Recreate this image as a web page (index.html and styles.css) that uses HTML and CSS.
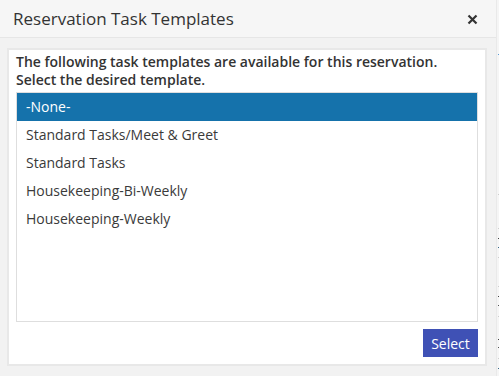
FILE: index.html
```html
<!DOCTYPE html>
<html>
<head>
    <meta charset="utf-8">
    <link rel="stylesheet" href="styles.css">
</head>
<body>
  <div class="page">
    <div class="dialog">
      <div class="dialog-header">
        <span class="dialog-title">Reservation Task Templates</span>
        <button class="close" aria-label="Close">
          <svg width="11" height="11" viewBox="0 0 11 11">
            <path d="M1.5 1.5 L9.5 9.5 M9.5 1.5 L1.5 9.5" stroke="#333" stroke-width="2.2" fill="none"/>
          </svg>
        </button>
      </div>
      <div class="dialog-body">
        <div class="panel">
          <p class="intro">The following task templates are available for this reservation. Select the desired template.</p>
          <ul class="template-list" role="listbox">
            <li class="template selected" role="option" aria-selected="true">-None-</li>
            <li class="template" role="option">Standard Tasks/Meet &amp; Greet</li>
            <li class="template" role="option">Standard Tasks</li>
            <li class="template" role="option">Housekeeping-Bi-Weekly</li>
            <li class="template" role="option">Housekeeping-Weekly</li>
          </ul>
          <div class="actions">
            <button class="btn-select">Select</button>
          </div>
        </div>
      </div>
    </div>
    <div class="behind"></div>
  </div>
</body>
</html>
```

FILE: styles.css
```css
* {
    box-sizing: border-box;
}

body {
    margin: 0;
    font-family: "Open Sans", "Liberation Sans", sans-serif;
    color: #333;
    background: #f4f4f4;
}

.page {
    display: flex;
    width: 499px;
    height: 376px;
    overflow: hidden;
}

.dialog {
    width: 497px;
    display: flex;
    flex-direction: column;
    border-right: 1px solid #e9e9e9;
}

.dialog-header {
    height: 38px;
    background: #f6f6f6;
    border-bottom: 1px solid #e6e6e6;
    display: flex;
    align-items: center;
    justify-content: space-between;
    padding: 0 18px 0 13px;
}

.dialog-title {
    font-size: 17px;
    color: #333;
    margin-top: -1px;
}

.close {
    border: 0;
    background: none;
    padding: 0;
    width: 11px;
    height: 11px;
    display: flex;
    margin-top: 1px;
}

.dialog-body {
    flex: 1;
    background: #f2f2f2;
    padding: 10px 9px 10px 7px;
}

.panel {
    height: 100%;
    background: #fff;
    border: 2px solid #e8e8e8;
    padding: 3px 7px 7px 7px;
    display: flex;
    flex-direction: column;
}

.intro {
    margin: 0 0 3px 0;
    font-size: 14px;
    font-weight: 600;
    line-height: 18px;
    color: #333;
}

.template-list {
    list-style: none;
    margin: 0;
    padding: 0;
    height: 230px;
    border: 1px solid #dedede;
}

.template {
    height: 28px;
    line-height: 28px;
    padding-left: 9px;
    font-size: 14px;
    color: #3a3a3a;
}

.template.selected {
    background: #1572ab;
    color: #fff;
}

.actions {
    display: flex;
    justify-content: flex-end;
    margin-top: 7px;
}

.btn-select {
    width: 55px;
    height: 28px;
    border: 0;
    border-radius: 0;
    background: #3f51b5;
    color: #fff;
    font-family: "Open Sans", "Liberation Sans", sans-serif;
    font-size: 14px;
    padding: 0;
}

.behind {
    flex: 1;
    background:
        linear-gradient(#444, #444) 1px 238px / 2px 1px no-repeat,
        linear-gradient(#3a6a8a, #3a6a8a) 1px 247px / 2px 1px no-repeat,
        linear-gradient(#ccc, #ccc) 1px 257px / 2px 1px no-repeat,
        linear-gradient(#ccc, #ccc) 1px 286px / 2px 1px no-repeat,
        linear-gradient(#444, #444) 1px 296px / 2px 1px no-repeat,
        linear-gradient(#555, #555) 1px 305px / 2px 1px no-repeat,
        linear-gradient(#ccc, #ccc) 1px 316px / 2px 1px no-repeat,
        linear-gradient(#444, #444) 1px 339px / 2px 1px no-repeat,
        linear-gradient(#555, #555) 1px 347px / 2px 1px no-repeat,
        linear-gradient(#ccc, #ccc) 1px 358px / 2px 1px no-repeat,
        linear-gradient(#3a6a8a, #3a6a8a) 1px 368px / 2px 1px no-repeat,
        linear-gradient(#ccc, #ccc) 1px 194px / 2px 1px no-repeat,
        linear-gradient(#ccc, #ccc) 1px 228px / 2px 1px no-repeat,
        linear-gradient(#5b9bd5, #5b9bd5) 1px 54px / 2px 1px no-repeat,
        #f5f5f5;
}
```
